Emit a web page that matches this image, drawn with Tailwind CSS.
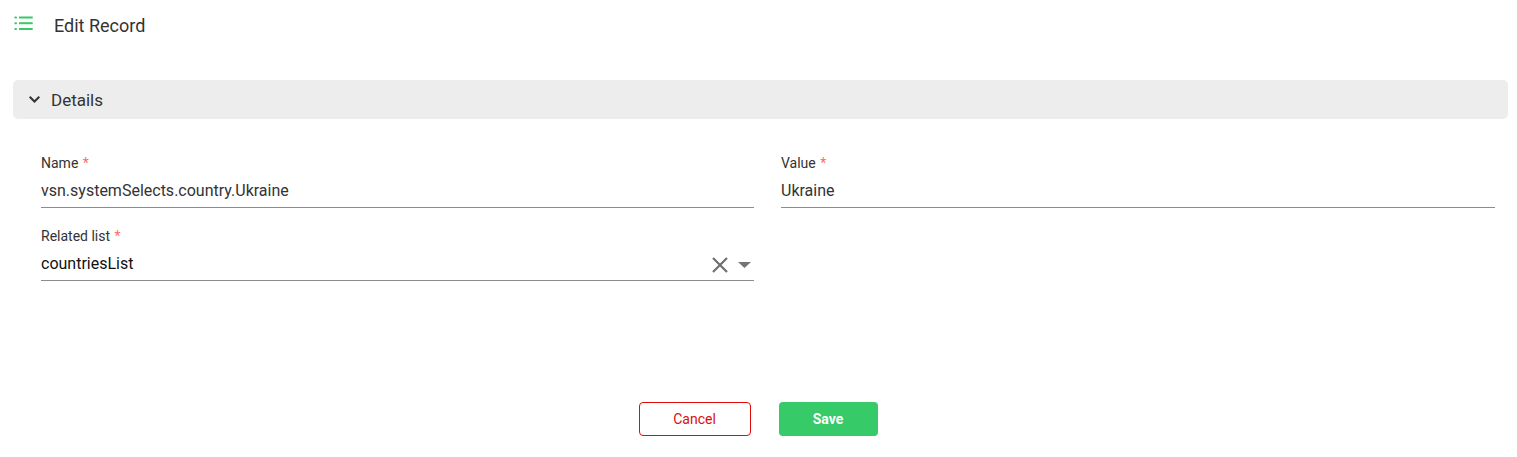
<!DOCTYPE html>
<html lang="en">
<head>
  <meta charset="UTF-8" />
  <title>Edit Record</title>
  <script src="https://cdn.jsdelivr.net/npm/@tailwindcss/browser@4"></script>
</head>
<body class="bg-white h-[457px] overflow-hidden font-['Roboto',sans-serif] text-[#333333]">
  <header class="h-[80px] pl-[13px] flex items-start">
    <svg class="w-[20px] h-[18px] mt-[15px]" viewBox="0 0 20 18" fill="none">
      <g fill="#36ca68">
        <rect x="1.3" y="1.5" width="2.7" height="2" rx="1"/>
        <rect x="1.3" y="7.2" width="2.7" height="2" rx="1"/>
        <rect x="1.3" y="13" width="2.7" height="2" rx="1"/>
        <rect x="6" y="1.5" width="13.7" height="2"/>
        <rect x="6" y="7.2" width="13.7" height="2"/>
        <rect x="6" y="13" width="13.7" height="2"/>
      </g>
    </svg>
    <h1 class="ml-[21px] mt-[15px] text-[18px] leading-[22px]">Edit Record</h1>
  </header>

  <section class="mx-[13px] w-[1495px] h-[39px] bg-[#ededed] rounded-[5px] flex items-center pl-[15px]">
    <svg class="w-[13px] h-[9px]" viewBox="0 0 13 9" fill="none">
      <path d="M1.7 1.7 L6.5 6.5 L11.3 1.7" stroke="#333333" stroke-width="2"/>
    </svg>
    <h2 class="ml-[10px] text-[17px] leading-[20px] pt-[1px]">Details</h2>
  </section>

  <main class="pl-[41px] pr-[22px] pt-[35px] grid grid-cols-[713px_714px] gap-x-[27px] gap-y-[18px]">
    <div class="h-[54px] border-b border-[#8c8c8c]">
      <label class="block text-[14px] leading-[18px]">Name <span class="text-[#ff6b6b] ml-[1px]">*</span></label>
      <div class="mt-[9px] text-[16px] leading-[20px]">vsn.systemSelects.country.Ukraine</div>
    </div>
    <div class="h-[54px] border-b border-[#8c8c8c]">
      <label class="block text-[14px] leading-[18px]">Value <span class="text-[#ff6b6b] ml-[1px]">*</span></label>
      <div class="mt-[9px] text-[16px] leading-[20px]">Ukraine</div>
    </div>
    <div class="h-[55px] border-b border-[#8c8c8c] flex items-end justify-between">
      <div class="h-full">
        <label class="block text-[14px] leading-[18px] mt-[1px]">Related list <span class="text-[#ff6b6b] ml-[1px]">*</span></label>
        <div class="mt-[9px] text-[16px] leading-[20px] text-[#111111]">countriesList</div>
      </div>
      <div class="flex items-center gap-[9px] pr-[3px] pb-[6px]">
        <svg class="w-[18px] h-[18px]" viewBox="0 0 18 18" fill="none">
          <path d="M2 2 L16 16 M16 2 L2 16" stroke="#6f6f6f" stroke-width="2.2"/>
        </svg>
        <svg class="w-[13px] h-[6px]" viewBox="0 0 13 6"><path d="M0 0 H13 L6.5 6 Z" fill="#757575"/></svg>
      </div>
    </div>
  </main>

  <footer class="mt-[121px] flex justify-center gap-[28px] ml-[-1px]">
    <button class="w-[112px] h-[34px] border border-[#e00b0b] rounded-[4px] text-[#e00b0b] text-[14px]">Cancel</button>
    <button class="w-[99px] h-[34px] bg-[#36ca68] rounded-[4px] text-white text-[14px] font-bold">Save</button>
  </footer>
</body>
</html>
